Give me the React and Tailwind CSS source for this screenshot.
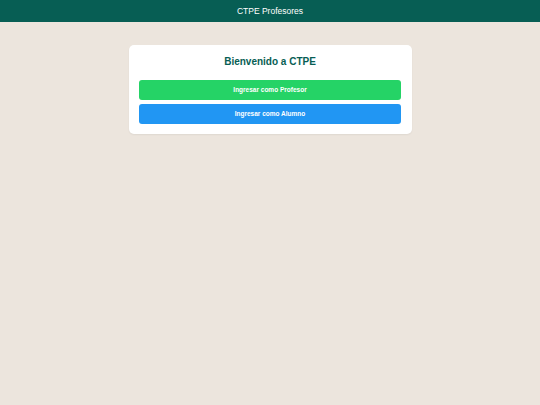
import React from "react";

const App = () => {
  return (
    <div className="min-h-screen w-full bg-[#ECE5DD] font-['Liberation_Sans',Arial,sans-serif]">
      {/* Header */}
      <header className="h-[22px] bg-[#075E54] flex items-center justify-center">
        <span className="text-white text-[8.5px] leading-none">CTPE Profesores</span>
      </header>

      {/* Login card */}
      <div className="w-[283px] mx-auto mt-[23px] bg-white rounded-[5px] shadow-[0_1px_2px_rgba(0,0,0,0.06)] px-[10.5px] pt-[11px] pb-[10.5px]">
        <h2 className="text-center font-bold text-[10px] leading-[11.5px] text-[#075E54]">
          Bienvenido a CTPE
        </h2>
        <div className="mt-[12.5px] flex flex-col gap-[4px]">
          <button className="h-[20px] w-full rounded-[3px] bg-[#25D366] text-white font-bold text-[6.5px]">
            Ingresar como Profesor
          </button>
          <button className="h-[19.5px] w-full rounded-[3px] bg-[#2196F3] text-white font-bold text-[6.5px]">
            Ingresar como Alumno
          </button>
        </div>
      </div>
    </div>
  );
};

export default App;
